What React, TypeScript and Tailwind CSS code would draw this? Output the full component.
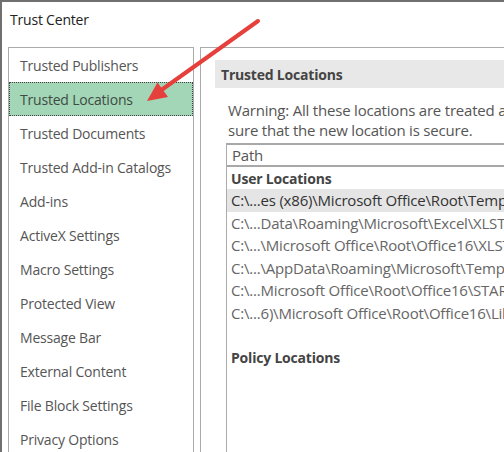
const navItems = [
  "Trusted Publishers",
  "Trusted Locations",
  "Trusted Documents",
  "Trusted Add-in Catalogs",
  "Add-ins",
  "ActiveX Settings",
  "Macro Settings",
  "Protected View",
  "Message Bar",
  "External Content",
  "File Block Settings",
  "Privacy Options",
];

const userPaths = [
  "C:\\...es (x86)\\Microsoft Office\\Root\\Templates\\",
  "C:\\...Data\\Roaming\\Microsoft\\Excel\\XLSTART\\",
  "C:\\...\\Microsoft Office\\Root\\Office16\\XLSTART\\",
  "C:\\...\\AppData\\Roaming\\Microsoft\\Templates\\",
  "C:\\...Microsoft Office\\Root\\Office16\\STARTUP\\",
  "C:\\...6)\\Microsoft Office\\Root\\Office16\\Library\\",
];

export default function App() {
  return (
    <div
      className="relative w-[504px] h-[452px] overflow-hidden bg-white border-t-2 border-l-2 border-[#707070] flex flex-col tracking-[-0.2px]"
      style={{ fontFamily: '"Open Sans", "Noto Sans", sans-serif' }}
    >
      {/* Title */}
      <div className="h-[45px] shrink-0 pl-[8px] pt-[8px] text-[14px] leading-[20px] text-[#222]">
        Trust Center
      </div>

      <div className="flex flex-1 min-h-0">
        {/* Left nav */}
        <div className="ml-[6px] w-[186px] shrink-0 border border-b-0 border-[#ababab] flex flex-col">
          {navItems.map((item) => {
            const selected = item === "Trusted Locations";
            return (
              <div
                key={item}
                className={
                  selected
                    ? "h-[34px] shrink-0 flex items-center pl-[10px] text-[14px] text-[#3f4a44] bg-[#a2d6b6] border border-dotted border-[#444]"
                    : "h-[34px] shrink-0 flex items-center pl-[10px] text-[14px] text-[#555] border border-transparent"
                }
              >
                {item}
              </div>
            );
          })}
        </div>

        {/* Right panel */}
        <div className="ml-[6px] flex-1 min-w-0 border-l border-t border-[#ababab] overflow-hidden pt-[12px] pl-[14px]">
          <div className="h-[28px] bg-[#e8e8e8] flex items-center pl-[6px] text-[14px] font-bold text-[#444] whitespace-nowrap">
            Trusted Locations
          </div>

          <div className="mt-[12px] pl-[13px] text-[15px] leading-[20px] text-[#555] whitespace-nowrap">
            <div>Warning: All these locations are treated as trusted sources for opening files. If you change or add a location, make</div>
            <div>sure that the new location is secure.</div>
          </div>

          <div className="mt-[3px] ml-[11px] border-l border-[#ababab] h-[400px] flex flex-col whitespace-nowrap text-[15px]">
            <div className="h-[24px] shrink-0 flex items-center pl-[5px] border-t-2 border-b-2 border-[#a8a8a8] text-[#555]">
              Path
            </div>
            <div className="h-[22px] shrink-0 flex items-center pl-[4px] text-[14px] font-bold text-[#444]">
              User Locations
            </div>
            {userPaths.map((p, i) => (
              <div
                key={p}
                className={
                  i === 0
                    ? "h-[22.6px] shrink-0 flex items-center pl-[4px] bg-[#e5e5e5] text-[#333]"
                    : "h-[22.6px] shrink-0 flex items-center pl-[4px] text-[#666]"
                }
              >
                {p}
              </div>
            ))}
            <div className="h-[22px] shrink-0" />
            <div className="h-[22px] shrink-0 flex items-center pl-[4px] text-[14px] font-bold text-[#444]">
              Policy Locations
            </div>
          </div>
        </div>
      </div>

      {/* Red annotation arrow */}
      <svg
        className="absolute left-0 top-0 pointer-events-none"
        width="504"
        height="452"
        viewBox="0 0 504 452"
      >
        <line x1="256" y1="19" x2="158" y2="89" stroke="#e5403b" strokeWidth="4" strokeLinecap="round" />
        <polygon points="145,99 155.5,80.5 166,95" fill="#e5403b" />
      </svg>
    </div>
  );
}
